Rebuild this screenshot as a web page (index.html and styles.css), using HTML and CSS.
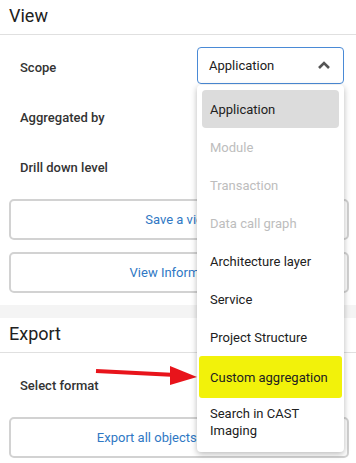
FILE: index.html
```html
<!DOCTYPE html>
<html lang="en">
<head>
    <meta charset="UTF-8">
    <meta name="viewport" content="width=device-width, initial-scale=1.0">
    <title>View settings</title>
    <link rel="stylesheet" href="styles.css">
</head>
<body>
    <div class="panel">
        <h2 class="panel-title">View</h2>
        <div class="fields">
            <div class="field">
                <span class="label">Scope</span>
                <div class="select-wrap">
                    <div class="select">
                        <span>Application</span>
                        <svg class="chevron" width="14" height="10" viewBox="0 0 14 10"><polyline points="2,8 7,3 12,8" fill="none" stroke="#555" stroke-width="2.6"/></svg>
                    </div>
                    <ul class="menu">
                        <li class="item selected">Application</li>
                        <li class="item disabled">Module</li>
                        <li class="item disabled">Transaction</li>
                        <li class="item disabled">Data call graph</li>
                        <li class="item">Architecture layer</li>
                        <li class="item">Service</li>
                        <li class="item">Project Structure</li>
                        <li class="item marked">Custom aggregation</li>
                        <li class="item">Search in CAST Imaging</li>
                    </ul>
                </div>
            </div>
            <div class="field">
                <span class="label">Aggregated by</span>
            </div>
            <div class="field">
                <span class="label">Drill down level</span>
            </div>
        </div>
        <button class="action">Save a view</button>
        <button class="action">View Information</button>
    </div>

    <div class="panel">
        <h2 class="panel-title">Export</h2>
        <div class="fields">
            <div class="field">
                <span class="label">Select format</span>
            </div>
        </div>
        <button class="action">Export all objects in the view</button>
    </div>

    <svg class="arrow" width="110" height="24" viewBox="0 0 110 24">
        <line x1="2" y1="6" x2="82" y2="10" stroke="#e8141b" stroke-width="4"/>
        <polygon points="76,1 103,12 76,20" fill="#e8141b"/>
    </svg>
</body>
</html>
```

FILE: styles.css
```css
body {
    margin: 0;
    font-family: Roboto, "Liberation Sans", Arial, sans-serif;
    font-size: 13px;
    color: #212121;
    background-color: #f4f4f4;
    position: relative;
    height: 463px;
    overflow: hidden;
}
.panel {
    background: white;
    margin-bottom: 13px;
    padding-bottom: 12px;
}
.panel-title {
    margin: 0;
    padding: 0 9px;
    height: 34px;
    line-height: 32px;
    font-size: 18px;
    font-weight: 400;
    border-bottom: 1px solid #e0e0e0;
}
.fields {
    padding-top: 7px;
    margin-bottom: 7px;
}
.field {
    height: 50px;
    display: flex;
    align-items: center;
    justify-content: space-between;
    padding: 0 12px 0 20px;
}
.label {
    font-weight: 500;
    color: #333;
}
.select-wrap {
    position: relative;
    width: 147px;
}
.select {
    height: 35px;
    border: 1px solid #4a8ad6;
    border-radius: 4px;
    display: flex;
    align-items: center;
    justify-content: space-between;
    padding: 0 12px 0 11px;
    margin-top: -3px;
}
.chevron {
    display: block;
    margin-top: -2px;
}
.menu {
    position: absolute;
    top: 35px;
    left: 0;
    width: 147px;
    box-sizing: border-box;
    margin: 0;
    padding: 5px 5px;
    list-style: none;
    background: white;
    border-radius: 4px;
    box-shadow: 0 2px 6px rgba(0, 0, 0, 0.28);
    z-index: 2;
}
.item {
    min-height: 38px;
    display: flex;
    align-items: center;
    padding: 0 8px;
    border-radius: 4px;
    line-height: 17px;
}
.item:last-child {
    padding: 5px 8px 6px;
}
.selected {
    background-color: #dcdcdc;
}
.disabled {
    color: #bdbdbd;
}
.marked {
    background-color: #f2f20a;
    margin: 0 -3px;
    padding: 2px 11px;
    border-radius: 3px;
}
.action {
    display: block;
    width: 340px;
    height: 41px;
    margin: 0 0 12px 9px;
    border: 2px solid #d2d2d2;
    border-radius: 5px;
    background: white;
    color: #2f78c4;
    font-family: inherit;
    font-size: 13px;
}
.action:last-child {
    margin-bottom: 0;
}
.arrow {
    position: absolute;
    left: 94px;
    top: 365px;
}
```
